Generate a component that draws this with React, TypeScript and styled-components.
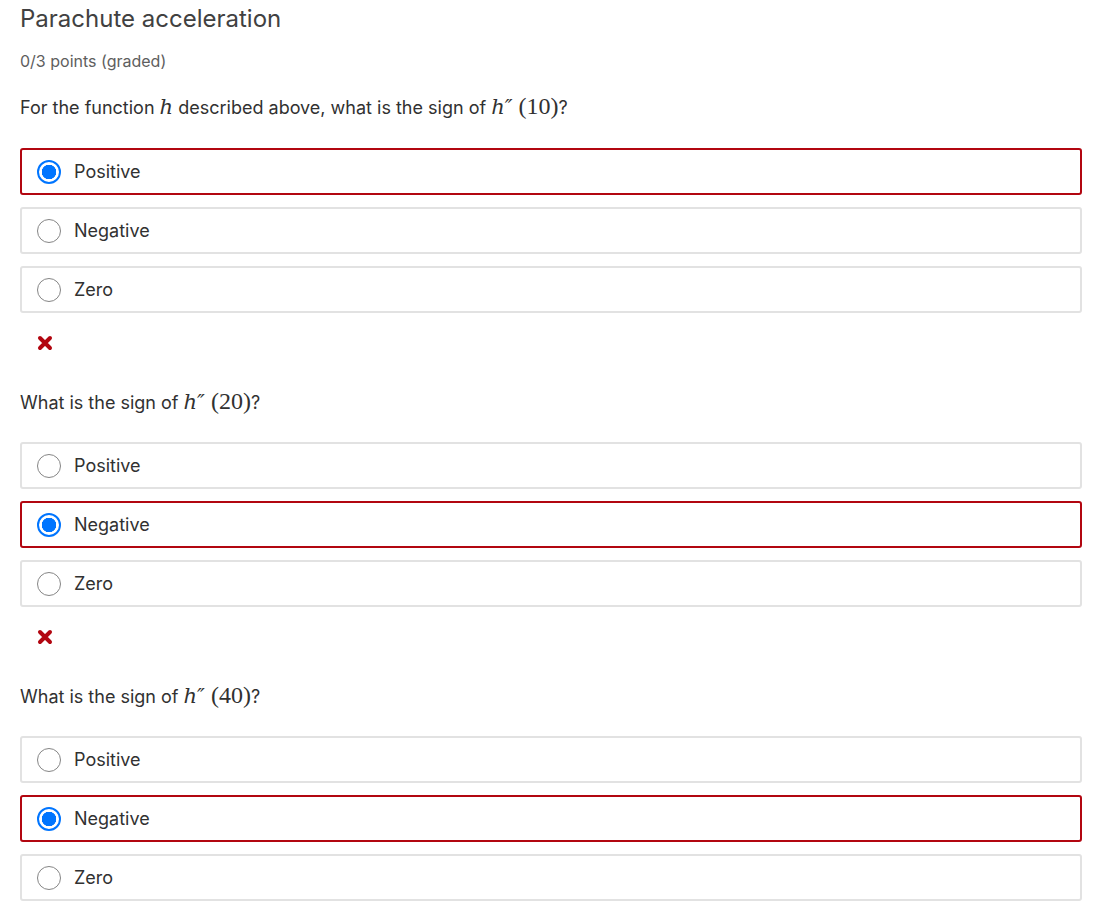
import React from "react";
import styled, { createGlobalStyle } from "styled-components";

const GlobalStyle = createGlobalStyle`
  body {
    margin: 0;
    background: #ffffff;
    font-family: Inter, "Open Sans", sans-serif;
    color: #313131;
  }
`;

const Page = styled.div`
  padding: 4px 36px 0 20px;
  display: flex;
  flex-direction: column;
`;

const Title = styled.h2`
  margin: 0;
  font-size: 24px;
  font-weight: 400;
  line-height: 30px;
  color: #414141;
`;

const Points = styled.div`
  margin-top: 16px;
  font-size: 16px;
  line-height: 22px;
  color: #5e5e5e;
`;

const Question = styled.p<{ $first?: boolean }>`
  margin: ${(p) => (p.$first ? "20px" : "36px")} 0 0;
  font-size: 18px;
  line-height: 28px;
  color: #313131;
`;

const MathVar = styled.span`
  font-family: "DejaVu Serif", "Liberation Serif", serif;
  font-style: italic;
  font-size: 21px;
`;

const MathNum = styled.span`
  font-family: "Liberation Serif", serif;
  font-size: 24px;
  margin-left: 6px;
`;

const Options = styled.div<{ $first?: boolean }>`
  margin-top: ${(p) => (p.$first ? "26px" : "25px")};
  display: flex;
  flex-direction: column;
  gap: 12px;
`;

const Option = styled.label<{ $wrong?: boolean }>`
  box-sizing: border-box;
  height: 47px;
  display: flex;
  align-items: center;
  gap: 13px;
  padding-left: 15px;
  border: 2px solid ${(p) => (p.$wrong ? "#b20610" : "#e2e2e2")};
  border-radius: 3px;
  font-size: 18px;
  color: #313131;
`;

const Radio = styled.span<{ $checked?: boolean }>`
  box-sizing: border-box;
  width: 24px;
  height: 24px;
  border-radius: 50%;
  flex: none;
  border: ${(p) => (p.$checked ? "2px solid #0075ff" : "1.5px solid #858585")};
  background: ${(p) =>
    p.$checked
      ? "radial-gradient(circle, #0075ff 0 7px, #ffffff 7.5px)"
      : "#ffffff"};
`;

const Status = styled.div`
  margin-top: 22px;
  padding-left: 17px;
  height: 16px;
  display: flex;
  align-items: center;
`;

const Cross = () => (
  <svg width="16" height="16" viewBox="0 0 16 16">
    <path
      d="M3 3 L13 13 M13 3 L3 13"
      stroke="#b20610"
      strokeWidth="4"
      strokeLinecap="round"
    />
  </svg>
);

const choices = ["Positive", "Negative", "Zero"];

const problems = [
  { prefix: "For the function ", var: true, arg: "10", picked: 0 },
  { prefix: "What is the sign of ", var: false, arg: "20", picked: 1 },
  { prefix: "What is the sign of ", var: false, arg: "40", picked: 1 },
];

export default function App() {
  return (
    <>
      <GlobalStyle />
      <Page>
        <Title>Parachute acceleration</Title>
        <Points>0/3 points (graded)</Points>
        {problems.map((q, i) => (
          <React.Fragment key={i}>
            <Question $first={i === 0}>
              {q.prefix}
              {q.var && (
                <>
                  <MathVar>h</MathVar> described above, what is the sign of{" "}
                </>
              )}
              <MathVar>h″</MathVar>
              <MathNum>({q.arg})</MathNum>?
            </Question>
            <Options $first={i === 0}>
              {choices.map((c, j) => (
                <Option key={c} $wrong={j === q.picked}>
                  <Radio $checked={j === q.picked} />
                  {c}
                </Option>
              ))}
            </Options>
            {i < problems.length - 1 && (
              <Status>
                <Cross />
              </Status>
            )}
          </React.Fragment>
        ))}
      </Page>
    </>
  );
}
